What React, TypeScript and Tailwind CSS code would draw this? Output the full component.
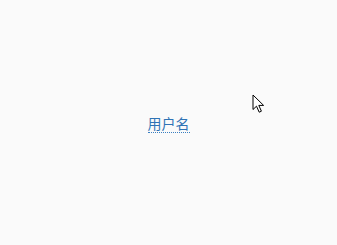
import React from "react";

export default function App() {
  return (
    <div className="relative w-[337px] h-[245px] bg-[#fafafa] flex items-center justify-center" style={{ fontFamily: '"Noto Sans CJK SC", "Noto Sans", sans-serif' }}>
      <span className="mt-[2px] text-[14px] leading-[17px] text-[#2f73b5] border-b border-dotted border-[#3b7fc0]">用户名</span>
      <svg className="absolute left-[252px] top-[94px]" width="14" height="20" viewBox="0 0 14 20">
        <path d="M1 1 L1 15.5 L4.5 12.2 L7.2 18.2 L9.4 17.2 L6.8 11.4 L11.6 11.4 Z" fill="#ffffff" stroke="#000000" strokeWidth="1" strokeLinejoin="miter" />
      </svg>
    </div>
  );
}
